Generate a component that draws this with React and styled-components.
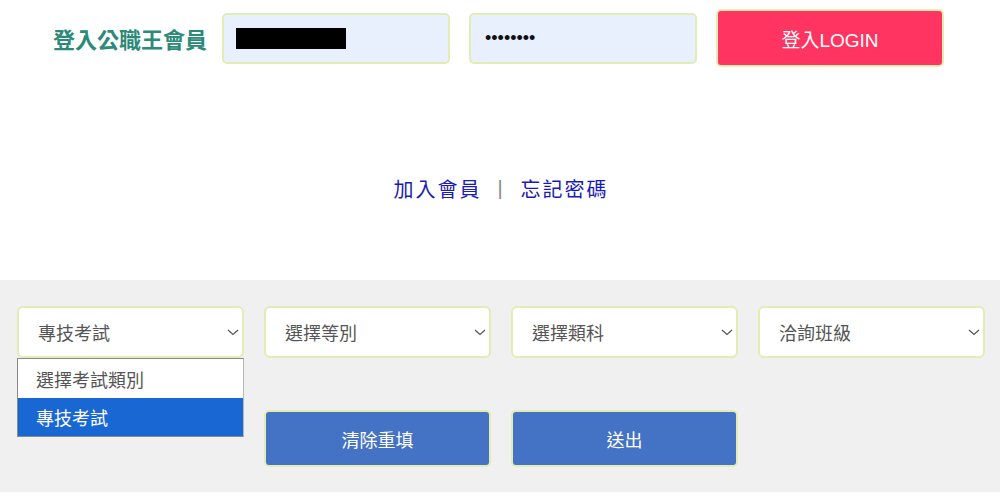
import React from "react";
import styled, { createGlobalStyle } from "styled-components";

const Global = createGlobalStyle`
  html, body { margin: 0; padding: 0; background: #fff; }
  body { font-family: "Liberation Sans", "Noto Sans CJK TC", sans-serif; }
  * { box-sizing: border-box; }
`;

const Page = styled.div`
  width: 1000px;
  height: 500px;
  background: #fff;
  overflow: hidden;
`;

const LoginBar = styled.div`
  display: flex;
  align-items: center;
  height: 58px;
  margin-top: 9px;
  padding-left: 53px;
`;

const BrandLabel = styled.div`
  font-size: 22px;
  font-weight: bold;
  color: #2b8a78;
  width: 169px;
  white-space: nowrap;
`;

const Field = styled.div`
  width: 228px;
  height: 51px;
  margin-right: 19px;
  background: #e8f0fe;
  border: 2px solid #e2edb4;
  border-radius: 5px;
  display: flex;
  align-items: center;
  padding-left: 12px;
`;

const Redacted = styled.span`
  display: inline-block;
  width: 110px;
  height: 21px;
  background: #000;
`;

const Dots = styled.span`
  font-family: "Liberation Sans", sans-serif;
  font-size: 18px;
  color: #111;
  padding-left: 2px;
`;

const LoginButton = styled.button`
  width: 228px;
  height: 58px;
  background: #ff3461;
  border: 2px solid #e6edb4;
  border-radius: 5px;
  color: #fff;
  font-family: "Liberation Sans", "Noto Sans CJK TC", sans-serif;
  font-size: 19px;
  padding: 0;
`;

const LinkRow = styled.div`
  margin-top: 106px;
  height: 30px;
  display: flex;
  justify-content: center;
  align-items: center;
  gap: 16px;
  font-family: "Noto Sans CJK TC", sans-serif;
  font-size: 20px;
  padding-left: 2px;
`;

const Link = styled.a`
  color: #1a1ab4;
  text-decoration: none;
  letter-spacing: 2px;
`;

const Sep = styled.span`
  color: #8a8a8a;
  font-family: "Liberation Sans", sans-serif;
  font-size: 20px;
  margin-right: 2px;
`;

const FilterPanel = styled.div`
  margin-top: 77px;
  height: 212px;
  background: #f0f0f0;
  padding: 26px 0 0 17px;
`;

const Grid = styled.div`
  display: grid;
  grid-template-columns: repeat(4, 227px);
  column-gap: 20px;
  row-gap: 52px;
`;

const SelectWrap = styled.div`
  position: relative;
`;

const SelectBox = styled.div`
  height: 52px;
  background: #fff;
  border: 2px solid #e2edb4;
  border-radius: 6px;
  display: flex;
  align-items: center;
  justify-content: space-between;
  padding: 0 3px 0 19px;
  font-family: "Noto Sans CJK TC", sans-serif;
  font-size: 18px;
  color: #555;
`;

const Chevron = styled.svg`
  width: 12px;
  height: 12px;
  flex: none;
`;

const ListBox = styled.div`
  position: absolute;
  left: 0;
  top: 52px;
  width: 227px;
  background: #fff;
  border: 1px solid #8a8a8a;
  border-right-color: #b8b8b8;
  z-index: 2;
`;

const Option = styled.div`
  height: ${(p) => (p.$first ? "39px" : "38px")};
  display: flex;
  align-items: center;
  padding-left: 18px;
  font-family: "Noto Sans CJK TC", sans-serif;
  font-size: 18px;
  color: ${(p) => (p.$active ? "#fff" : "#555")};
  background: ${(p) => (p.$active ? "#1967d2" : "#fff")};
`;

const ActionButton = styled.button`
  grid-column: ${(p) => p.$col};
  height: 57px;
  background: #4472c4;
  border: 2px solid #e2edb4;
  border-radius: 5px;
  color: #fff;
  font-family: "Noto Sans CJK TC", sans-serif;
  font-size: 18px;
  padding: 0;
`;

const ChevronIcon = () => (
  <Chevron viewBox="0 0 12 12">
    <path d="M1 4 L6 8.5 L11 4" fill="none" stroke="#555" strokeWidth="1.2" />
  </Chevron>
);

const Select = ({ label, children }) => (
  <SelectWrap>
    <SelectBox>
      <span>{label}</span>
      <ChevronIcon />
    </SelectBox>
    {children}
  </SelectWrap>
);

export default function App() {
  return (
    <Page>
      <Global />
      <LoginBar>
        <BrandLabel>登入公職王會員</BrandLabel>
        <Field>
          <Redacted />
        </Field>
        <Field>
          <Dots>••••••••</Dots>
        </Field>
        <LoginButton>登入LOGIN</LoginButton>
      </LoginBar>
      <LinkRow>
        <Link href="#">加入會員</Link>
        <Sep>|</Sep>
        <Link href="#">忘記密碼</Link>
      </LinkRow>
      <FilterPanel>
        <Grid>
          <Select label="專技考試">
            <ListBox>
              <Option $first>選擇考試類別</Option>
              <Option $active>專技考試</Option>
            </ListBox>
          </Select>
          <Select label="選擇等別" />
          <Select label="選擇類科" />
          <Select label="洽詢班級" />
          <ActionButton $col="2">清除重填</ActionButton>
          <ActionButton $col="3">送出</ActionButton>
        </Grid>
      </FilterPanel>
    </Page>
  );
}
